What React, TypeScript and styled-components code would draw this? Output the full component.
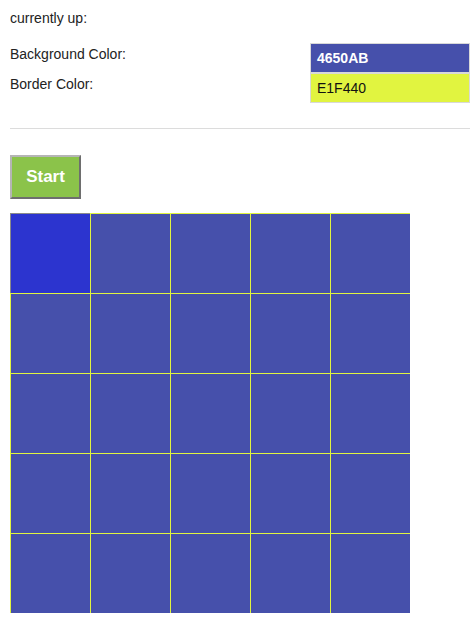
import React from "react";
import styled, { createGlobalStyle } from "styled-components";

const Global = createGlobalStyle`
  body { margin: 0; background: #fff; font-family: "Liberation Sans", Arial, sans-serif; color: #222; }
`;

const Page = styled.div`
  width: 460px;
  padding: 0 6px 0 10px;
`;

const Status = styled.div`
  font-size: 14px;
  line-height: 16px;
  padding-top: 10px;
  height: 43px;
  box-sizing: border-box;
`;

const ColorRows = styled.div`
  display: flex;
  flex-direction: column;
`;

const ColorRow = styled.div`
  display: flex;
  justify-content: space-between;
  align-items: flex-start;
  height: 30px;
`;

const Label = styled.div`
  font-size: 14px;
  line-height: 16px;
  padding-top: 3px;
`;

const Swatch = styled.div<{ $bg: string; $fg: string; $bold?: boolean }>`
  width: 160px;
  height: 30px;
  box-sizing: border-box;
  border: 1px solid #d8d8d8;
  background: ${(p) => p.$bg};
  color: ${(p) => p.$fg};
  font-size: 14px;
  font-weight: ${(p) => (p.$bold ? 700 : 400)};
  display: flex;
  align-items: center;
  padding-left: 6px;
`;

const Divider = styled.hr`
  border: none;
  border-top: 1px solid #dcdcdc;
  margin: 25px 0 26px;
`;

const StartButton = styled.button`
  width: 71px;
  height: 44px;
  box-sizing: border-box;
  background: #8bc34a;
  color: #fff;
  font-family: "Liberation Sans", Arial, sans-serif;
  font-size: 17px;
  font-weight: 700;
  border: 2px solid;
  border-color: #b5b5b5 #6e6e6e #6e6e6e #b5b5b5;
  padding: 0;
  display: block;
`;

const Grid = styled.div`
  display: grid;
  grid-template-columns: repeat(5, 80px);
  grid-auto-rows: 80px;
  width: 400px;
  margin-top: 14px;
`;

const Cell = styled.div<{ $active?: boolean }>`
  box-sizing: border-box;
  background: ${(p) => (p.$active ? "#2c34cf" : "#4650ab")};
  border-top: 1px solid ${(p) => (p.$active ? "#8a8a8a" : "#e1f440")};
  border-left: 1px solid ${(p) => (p.$active ? "#8a8a8a" : "#e1f440")};
`;

export default function App() {
  const cells = Array.from({ length: 25 }, (_, i) => i);
  return (
    <>
      <Global />
      <Page>
        <Status>currently up:</Status>
        <ColorRows>
          <ColorRow>
            <Label>Background Color:</Label>
            <Swatch $bg="#4650AB" $fg="#fff" $bold>
              4650AB
            </Swatch>
          </ColorRow>
          <ColorRow>
            <Label>Border Color:</Label>
            <Swatch $bg="#E1F440" $fg="#111">
              E1F440
            </Swatch>
          </ColorRow>
        </ColorRows>
        <Divider />
        <StartButton>Start</StartButton>
        <Grid>
          {cells.map((i) => (
            <Cell key={i} $active={i === 0} />
          ))}
        </Grid>
      </Page>
    </>
  );
}
